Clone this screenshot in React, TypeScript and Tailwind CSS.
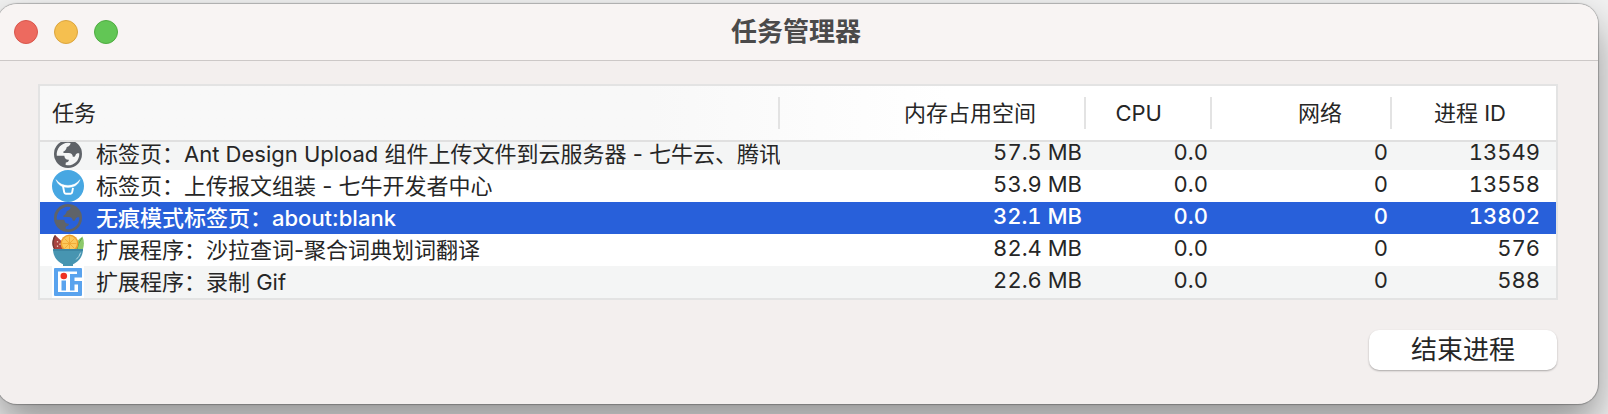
import type { ReactNode } from 'react';

function GlobeIcon({ sea }: { sea: string }) {
  return (
    <svg viewBox="0 0 32 32" className="size-8 shrink-0" aria-hidden="true">
      <circle cx="16" cy="16" r="14" fill="#5f6368" />
      <path
        fill={sea}
        d="M4.800 17.800C4 10.800 9 4.900 16 4.700l2.600.2C18.400 7 17 8.400 14.800 8.900c-.6 2.600-1.600 3.900-3.600 4.800l.4 1.300h5c2.600 0 4.200 1.500 4.200 3.800 1.600.2 2.400-.3 2.800-1.800.3-1.200 1.800-1.900 3.700-1.600C27.600 22 22.500 27.400 15.600 27.300l-2-.2.2-2.700c1.800 0 3-.8 3.100-2.600-2.600.2-4.300-1-4.600-4z"
      />
    </svg>
  );
}

function BullIcon() {
  return (
    <svg viewBox="0 0 32 32" className="size-8 shrink-0" aria-hidden="true">
      <circle cx="16" cy="16" r="16" fill="#47a7e2" />
      <path d="M4 9.600C7 13.600 11 15.400 16 15.400S25 13.600 28 9.600C26 15.600 21.500 17.400 16 17.400S6 15.600 4 9.600z" fill="#fff" stroke="#fff" strokeWidth=".4" />
      <path d="M11 16l1.200 6.200q.2 1.600 1.600 1.600h4.800q1.400 0 1.600-1.600l.8-4.400" fill="none" stroke="#fff" strokeWidth="1.900" />
    </svg>
  );
}

function SaladIcon() {
  return (
    <svg viewBox="0 0 32 32" className="size-8 shrink-0" aria-hidden="true">
      <path d="M3 1L18 15H2C-.5 11 0 5 3 1z" fill="#a8433f" />
      <path d="M3 1C0 5-.5 11 2 15l1-.5C1 11 1.300 6.500 3.900 2.200z" fill="#6c3a36" />
      <path d="M5.500 7v1.600M8 9.500v1.600M5.500 11.500v1.600" stroke="#e9c8b8" strokeWidth="1.300" />
      <path d="M22 12q3-6 8.500-9.500 2.500 6 .5 12.500h-9z" fill="#8cc96a" />
      <path d="M30 4q-4 5-5 11" stroke="#5ea246" fill="none" />
      <circle cx="17.500" cy="9.500" r="9" fill="#ee9d2c" />
      <circle cx="17.500" cy="9.500" r="7.500" fill="#fbc95c" />
      <path d="M17.500 2.500v13M10.500 9.500h14M12.500 4.500l10 10M22.500 4.500l-10 10" stroke="#f0a32f" strokeWidth=".8" />
      <path d="M1 15h30c0 7.500-4.500 13-10 15.200V32H11v-1.800C5.500 28 1 22.500 1 15z" fill="#4795b1" />
      <path d="M1 15h30l-.2 2H1.200z" fill="#3c86a3" />
      <path d="M28.500 19q-1.200 4-4 6.200" stroke="#b9dbe6" fill="none" strokeLinecap="round" />
    </svg>
  );
}

function GifIcon() {
  return (
    <svg viewBox="0 0 32 32" className="size-8 shrink-0" aria-hidden="true">
      <path fill="#fff" d="M0 0h32v32H0z" />
      <path
        fill="#59a3ee"
        d="M3 2h26q1 0 1 1v8.500h-7.500v3.500H30v14q0 1-1 1H3q-1 0-1-1V3q0-1 1-1zM6 5.500V26h20v-7.500h-3.500V24.500h-4.500V8h7V5.500z"
        fillRule="evenodd"
      />
      <path fill="#59a3ee" d="M9.500 14.500H14v10H9.500z" />
      <circle cx="11.800" cy="10" r="3.300" fill="#ee3224" />
    </svg>
  );
}

type Task = {
  icon: ReactNode;
  name: string;
  memory: string;
  cpu: string;
  network: string;
  pid: string;
  tone: string;
  scrolled?: boolean;
};

const tasks: Task[] = [
  { icon: <GlobeIcon sea="#f4f5f5" />, name: '标签页：Ant Design Upload 组件上传文件到云服务器 - 七牛云、腾讯', memory: '57.5 MB', cpu: '0.0', network: '0', pid: '13549', tone: 'bg-[#f4f5f5]', scrolled: true },
  { icon: <BullIcon />, name: '标签页：上传报文组装 - 七牛开发者中心', memory: '53.9 MB', cpu: '0.0', network: '0', pid: '13558', tone: 'bg-white' },
  { icon: <GlobeIcon sea="#2860da" />, name: '无痕模式标签页：about:blank', memory: '32.1 MB', cpu: '0.0', network: '0', pid: '13802', tone: 'bg-[#2860da] font-medium text-white' },
  { icon: <SaladIcon />, name: '扩展程序：沙拉查词-聚合词典划词翻译', memory: '82.4 MB', cpu: '0.0', network: '0', pid: '576', tone: 'bg-white' },
  { icon: <GifIcon />, name: '扩展程序：录制 Gif', memory: '22.6 MB', cpu: '0.0', network: '0', pid: '588', tone: 'bg-[#f4f5f5]' },
];

function NumberCell({ scrolled, last = false, children }: { scrolled?: boolean; last?: boolean; children: ReactNode }) {
  return (
    <td className={`p-0 text-right align-top tabular-nums ${last ? 'pr-4' : 'pr-1'}`}>
      <div className={scrolled ? 'h-7 leading-5' : 'h-8 leading-7'}>{children}</div>
    </td>
  );
}

function HeaderCell({ last = false, children }: { last?: boolean; children: ReactNode }) {
  return (
    <th scope="col" className="p-0 font-normal">
      <div className={`flex h-8 items-center justify-end ${last ? 'pr-[50px]' : 'border-r-2 border-[#e3e3e3] pr-12'}`}>{children}</div>
    </th>
  );
}

export default function App() {
  return (
    <div className="min-h-screen overflow-hidden bg-[#f2f2f2] pt-1 pr-[10px] pb-[10px] font-['Inter','Noto_Sans_CJK_SC',sans-serif] text-[22px] text-[#262626]">
      <main className="-ml-[3px] overflow-hidden rounded-[20px] bg-[#f3efee] shadow-[0_0_1px_1px_rgba(0,0,0,0.25),0_20px_40px_rgba(0,0,0,0.4)]">
        <header className="grid h-[57px] grid-cols-[1fr_auto_1fr] items-center border-b border-[#ccc8c7] bg-[#f8f4f3] pr-5 pl-[17px]">
          <div className="flex gap-4">
            <button aria-label="关闭" className="size-6 rounded-full border border-[#d9564c] bg-[#ed6a5f]" />
            <button aria-label="最小化" className="size-6 rounded-full border border-[#dca53e] bg-[#f5bf4f]" />
            <button aria-label="缩放" className="size-6 rounded-full border border-[#4fac41] bg-[#62c655]" />
          </div>
          <h1 className="text-[26px] leading-8 font-bold text-[#4b4a4a]">任务管理器</h1>
        </header>
        <div className="pt-[23px] pr-10 pb-[34px] pl-[41px]">
          <div className="border-2 border-[#e3e3e3]">
            <table className="w-full table-fixed border-collapse">
              <colgroup>
                <col />
                <col className="w-[306px]" />
                <col className="w-[126px]" />
                <col className="w-[180px]" />
                <col className="w-[164px]" />
              </colgroup>
              <thead>
                <tr className="h-[55px] border-b-2 border-[#e0e0e0] bg-linear-to-r from-[#f8f8f8] from-40% to-white to-60%">
                  <th scope="col" className="p-0 text-left font-normal">
                    <div className="flex h-8 items-center border-r-2 border-[#e3e3e3] pl-3">任务</div>
                  </th>
                  <HeaderCell>内存占用空间</HeaderCell>
                  <HeaderCell>CPU</HeaderCell>
                  <HeaderCell>网络</HeaderCell>
                  <HeaderCell last>进程 ID</HeaderCell>
                </tr>
              </thead>
              <tbody>
                {tasks.map((task) => (
                  <tr key={task.pid} className={task.tone}>
                    <td className="p-0">
                      <div className={`flex items-end gap-3 overflow-hidden pl-3 ${task.scrolled ? 'h-7 leading-6' : 'h-8 leading-8'}`}>
                        {task.icon}
                        <span className="shrink-0 self-start whitespace-nowrap">{task.name}</span>
                      </div>
                    </td>
                    <NumberCell scrolled={task.scrolled}>{task.memory}</NumberCell>
                    <NumberCell scrolled={task.scrolled}>{task.cpu}</NumberCell>
                    <NumberCell scrolled={task.scrolled}>{task.network}</NumberCell>
                    <NumberCell scrolled={task.scrolled} last>{task.pid}</NumberCell>
                  </tr>
                ))}
              </tbody>
            </table>
          </div>
          <div className="mt-[30px] flex justify-end pr-px">
            <button className="h-10 w-[188px] rounded-[10px] bg-white text-[26px] leading-8 shadow-[0_1px_2px_rgba(0,0,0,0.3)]">结束进程</button>
          </div>
        </div>
      </main>
    </div>
  );
}
